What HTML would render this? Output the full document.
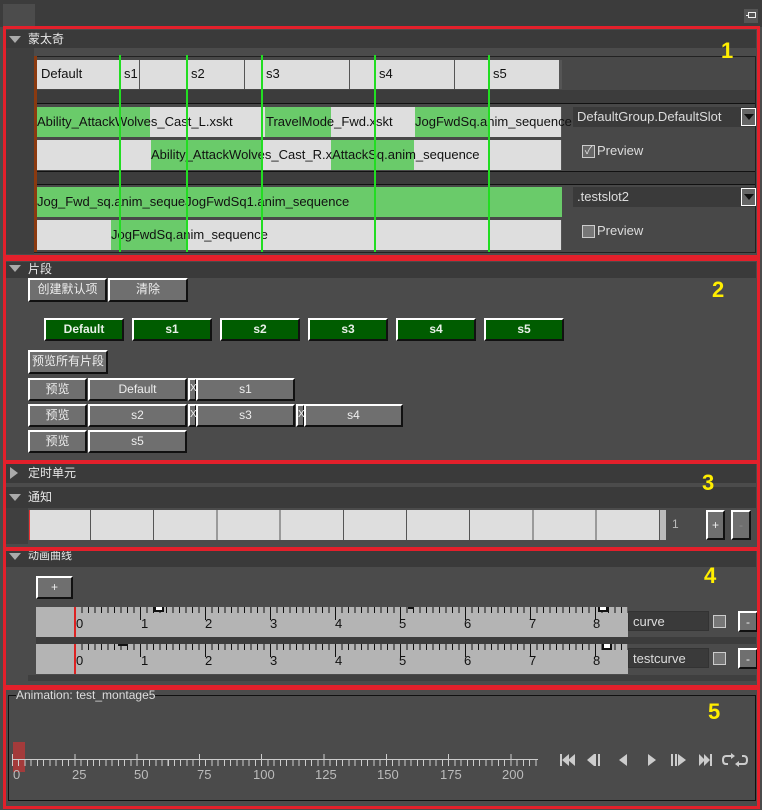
<!DOCTYPE html>
<html><head><meta charset="utf-8"><style>
*{margin:0;padding:0;box-sizing:border-box}
body{width:762px;height:810px;background:#4b4b4b;position:relative;overflow:hidden;font-family:"Liberation Sans","Noto Sans CJK SC",sans-serif;font-size:12px;color:#111}
.a{position:absolute}
.hdr{position:absolute;left:6px;right:6px;background:#3a3a3a;color:#e8e8e8;font-size:12px;padding-left:22px;line-height:18px}
.tri{position:absolute;left:3px;top:6px;width:0;height:0;border-left:6px solid transparent;border-right:6px solid transparent;border-top:7px solid #aaa}
.trir{position:absolute;left:4px;top:3px;width:0;height:0;border-top:6px solid transparent;border-bottom:6px solid transparent;border-left:8px solid #aaa}
.red{position:absolute;border:3px solid #e3202b}
.lt{position:absolute;background:#dedede;border-right:1px solid #555}
.gr{position:absolute;background:#6acb6a}
.tx{position:absolute;font-size:13px;color:#111;white-space:nowrap;line-height:30px}
.gl{position:absolute;width:2px;background:#22dd22;top:55px;height:197px}
.btn{position:absolute;background:#6f6f6f;color:#eee;text-align:center;font-size:12px;border-top:2px solid #fff;border-left:2px solid #fff;border-right:2px solid #111;border-bottom:2px solid #111;line-height:18px}
.gb{position:absolute;background:#005c00;color:#e8f0e8;text-align:center;font-size:12px;font-weight:bold;border-top:2px solid #fff;border-left:2px solid #fff;border-right:2px solid #111;border-bottom:2px solid #111;line-height:19px;width:80px;height:23px;top:318px}
.y{position:absolute;color:#ffee00;font-weight:bold;font-size:22px}
.dd{position:absolute;background:#3a3a3a;color:#ddd;font-size:13px;line-height:20px;padding-left:4px;height:20px}
.cb{position:absolute;width:13px;height:13px;background:#777;border:1px solid #ccc}
.lab{position:absolute;color:#ddd;font-size:13px}
.rt{position:absolute;height:6px;background:repeating-linear-gradient(90deg,#111 0 1px,transparent 1px 6.5px)}
.rT{position:absolute;height:13px;background:repeating-linear-gradient(90deg,#111 0 1px,transparent 1px 65px)}
.num{position:absolute;font-size:13px;color:#111}
</style></head><body>
<div class="a" style="left:0;top:0;width:762px;height:27px;background:#3c3c3c"></div>
<div class="a" style="left:3px;top:4px;width:32px;height:22px;background:#4c4c4c"></div>
<div class="a" style="left:744px;top:9px;width:14px;height:14px;background:#555"></div>
<div class="a" style="left:748px;top:12px;width:8px;height:6px;border:1px solid #eee"></div>
<div class="a" style="left:746px;top:15px;width:3px;height:1px;background:#eee"></div>

<div class="a" style="left:6px;top:48px;width:28px;height:206px;background:#3f3f3f"></div>
<div class="hdr" style="top:30px;height:18px"><div class="tri"></div>蒙太奇</div>
<div class="a" style="left:34px;top:56px;width:722px;height:197px;background:#484848;border:1px solid #222"></div>
<div class="a" style="left:34px;top:56px;width:3px;height:196px;background:#8a3a10"></div>
<div class="lt" style="left:37px;top:60px;width:103px;height:29px"></div>
<div class="lt" style="left:140px;top:60px;width:105px;height:29px"></div>
<div class="lt" style="left:245px;top:60px;width:105px;height:29px"></div>
<div class="lt" style="left:350px;top:60px;width:105px;height:29px"></div>
<div class="lt" style="left:455px;top:60px;width:107px;height:29px;border-right:3px solid #555"></div>
<div class="tx" style="left:41px;top:59px">Default</div>
<div class="tx" style="left:124px;top:59px">s1</div>
<div class="tx" style="left:191px;top:59px">s2</div>
<div class="tx" style="left:266px;top:59px">s3</div>
<div class="tx" style="left:379px;top:59px">s4</div>
<div class="tx" style="left:493px;top:59px">s5</div>
<div class="a" style="left:37px;top:90px;width:718px;height:14px;background:#3c3c3c;border-bottom:1px solid #111"></div>
<div class="a" style="left:37px;top:171px;width:718px;height:14px;background:#3c3c3c;border-bottom:1px solid #111;border-top:1px solid #111"></div>
<div class="lt" style="left:37px;top:107px;width:525px;height:30px"></div>
<div class="gr" style="left:37px;top:107px;width:113px;height:30px"></div>
<div class="gr" style="left:265px;top:107px;width:66px;height:30px"></div>
<div class="gr" style="left:415px;top:107px;width:75px;height:30px"></div>
<div class="tx" style="left:37px;top:107px">Ability_AttackWolves_Cast_L.xskt</div>
<div class="tx" style="left:266px;top:107px">TravelMode_Fwd.xskt</div>
<div class="tx" style="left:415px;top:107px">JogFwdSq.anim_sequence</div>
<div class="lt" style="left:37px;top:140px;width:525px;height:30px"></div>
<div class="gr" style="left:151px;top:140px;width:263px;height:30px"></div>
<div class="a" style="left:262px;top:140px;width:69px;height:30px;background:#dedede"></div>
<div class="tx" style="left:151px;top:140px">Ability_AttackWolves_Cast_R.xAttackSq.anim_sequence</div>
<div class="gr" style="left:37px;top:187px;width:525px;height:30px"></div>
<div class="tx" style="left:37px;top:187px">Jog_Fwd_sq.anim_sequeJogFwdSq1.anim_sequence</div>
<div class="lt" style="left:37px;top:220px;width:525px;height:30px"></div>
<div class="gr" style="left:111px;top:220px;width:76px;height:30px"></div>
<div class="tx" style="left:111px;top:220px">JogFwdSq.anim_sequence</div>
<div class="gl" style="left:119px"></div><div class="gl" style="left:186px"></div><div class="gl" style="left:261px"></div><div class="gl" style="left:374px"></div><div class="gl" style="left:488px"></div>
<div class="dd" style="left:573px;top:107px;width:182px">DefaultGroup.DefaultSlot</div>
<div class="a" style="left:741px;top:108px;width:15px;height:18px;background:#666;border:1px solid #fff"><div class="a" style="left:2px;top:5px;border-left:5px solid transparent;border-right:5px solid transparent;border-top:6px solid #111"></div></div>
<div class="cb" style="left:582px;top:145px;background:#666;color:#ddd;font-size:11px;line-height:11px;text-align:center">✓</div><div class="lab" style="left:597px;top:143px">Preview</div>
<div class="dd" style="left:573px;top:187px;width:182px">.testslot2</div>
<div class="a" style="left:741px;top:188px;width:15px;height:18px;background:#666;border:1px solid #fff"><div class="a" style="left:2px;top:5px;border-left:5px solid transparent;border-right:5px solid transparent;border-top:6px solid #111"></div></div>
<div class="cb" style="left:582px;top:225px"></div><div class="lab" style="left:597px;top:223px">Preview</div>
<div class="red" style="left:3px;top:26px;width:757px;height:232px"></div>
<div class="y" style="left:721px;top:38px">1</div>

<div class="hdr" style="top:262px;height:16px;line-height:14px"><div class="tri" style="top:3px"></div>片段</div>
<div class="btn" style="left:28px;top:278px;width:79px;height:24px">创建默认项</div>
<div class="btn" style="left:108px;top:278px;width:80px;height:24px">清除</div>
<div class="gb" style="left:44px">Default</div><div class="gb" style="left:132px">s1</div><div class="gb" style="left:220px">s2</div><div class="gb" style="left:308px">s3</div><div class="gb" style="left:396px">s4</div><div class="gb" style="left:484px">s5</div>
<div class="btn" style="left:28px;top:350px;width:80px;height:24px">预览所有片段</div>
<div class="btn" style="left:28px;top:378px;width:59px;height:23px">预览</div>
<div class="btn" style="left:88px;top:378px;width:99px;height:23px">Default</div>
<div class="btn" style="left:188px;top:378px;width:9px;height:23px;font-size:10px">X</div>
<div class="btn" style="left:196px;top:378px;width:99px;height:23px">s1</div>
<div class="btn" style="left:28px;top:404px;width:59px;height:23px">预览</div>
<div class="btn" style="left:88px;top:404px;width:99px;height:23px">s2</div>
<div class="btn" style="left:188px;top:404px;width:9px;height:23px;font-size:10px">X</div>
<div class="btn" style="left:196px;top:404px;width:99px;height:23px">s3</div>
<div class="btn" style="left:296px;top:404px;width:9px;height:23px;font-size:10px">X</div>
<div class="btn" style="left:304px;top:404px;width:99px;height:23px">s4</div>
<div class="btn" style="left:28px;top:430px;width:59px;height:23px">预览</div>
<div class="btn" style="left:88px;top:430px;width:99px;height:23px">s5</div>
<div class="red" style="left:3px;top:258px;width:757px;height:205px"></div>
<div class="y" style="left:712px;top:277px">2</div>

<div class="hdr" style="top:464px;height:19px"><div class="trir"></div>定时单元</div>
<div class="hdr" style="top:487px;height:21px;line-height:21px"><div class="tri" style="top:7px"></div>通知</div>
<div class="a" style="left:6px;top:508px;width:22px;height:36px;background:#3f3f3f"></div>
<div class="a" style="left:29px;top:510px;width:637px;height:30px;background:#dedede;background-image:repeating-linear-gradient(90deg,transparent 0 61px,#555 61px 62px,transparent 62px 63.2px)"></div>
<div class="a" style="left:29px;top:510px;width:1px;height:30px;background:#e33"></div>
<div class="a" style="left:660px;top:510px;width:6px;height:30px;background:#bbb"></div>
<div class="lab" style="left:672px;top:517px;color:#bbb;font-size:12px">1</div>
<div class="btn" style="left:706px;top:510px;width:19px;height:30px;line-height:26px">+</div>
<div class="btn" style="left:731px;top:510px;width:20px;height:30px;line-height:26px;color:#888">-</div>
<div class="red" style="left:3px;top:461px;width:757px;height:89px"></div>
<div class="y" style="left:702px;top:470px">3</div>

<div class="hdr" style="top:551px;height:16px;line-height:10px;font-size:11px"><div class="tri" style="top:2px"></div>动画曲线</div>
<div class="btn" style="left:36px;top:576px;width:37px;height:23px">+</div>
<div class="a" style="left:36px;top:607px;width:592px;height:30px;background:#b4b4b4"></div>
<div class="a" style="left:36px;top:644px;width:592px;height:30px;background:#b4b4b4"></div>
<div class="rt" style="left:75px;top:607px;width:553px"></div><div class="rT" style="left:75px;top:607px;width:553px"></div>
<div class="rt" style="left:75px;top:644px;width:553px"></div><div class="rT" style="left:75px;top:644px;width:553px"></div>
<div class="a" style="left:74px;top:607px;width:2px;height:30px;background:#d22"></div>
<div class="a" style="left:74px;top:644px;width:2px;height:30px;background:#d22"></div>
<div class="a" style="left:154px;top:607px;width:10px;height:5px;background:#111;border:2px solid #111;border-top:0;background:#fff"></div>
<div class="a" style="left:408px;top:607px;width:6px;height:2px;background:#111"></div>
<div class="a" style="left:408px;top:607px;width:6px;height:2px;background:#111"></div>
<div class="a" style="left:598px;top:607px;width:10px;height:5px;border:2px solid #111;border-top:0;background:#fff"></div>
<div class="a" style="left:118px;top:644px;width:10px;height:2px;background:#111"></div>
<div class="a" style="left:602px;top:644px;width:10px;height:6px;border:2px solid #111;border-top:0;background:#fff"></div>
<div class="num" style="left:76px;top:616px">0</div><div class="num" style="left:141px;top:616px">1</div><div class="num" style="left:205px;top:616px">2</div><div class="num" style="left:270px;top:616px">3</div><div class="num" style="left:335px;top:616px">4</div><div class="num" style="left:399px;top:616px">5</div><div class="num" style="left:464px;top:616px">6</div><div class="num" style="left:529px;top:616px">7</div><div class="num" style="left:593px;top:616px">8</div>
<div class="num" style="left:76px;top:653px">0</div><div class="num" style="left:141px;top:653px">1</div><div class="num" style="left:205px;top:653px">2</div><div class="num" style="left:270px;top:653px">3</div><div class="num" style="left:335px;top:653px">4</div><div class="num" style="left:399px;top:653px">5</div><div class="num" style="left:464px;top:653px">6</div><div class="num" style="left:529px;top:653px">7</div><div class="num" style="left:593px;top:653px">8</div>
<div class="a" style="left:36px;top:637px;width:720px;height:7px;background:#3c3c3c"></div>
<div class="a" style="left:28px;top:675px;width:728px;height:6px;background:#3f3f3f"></div>
<div class="dd" style="left:628px;top:611px;width:81px;border:1px solid #333;color:#ddd">curve</div>
<div class="dd" style="left:628px;top:648px;width:81px;border:1px solid #333;color:#ddd">testcurve</div>
<div class="cb" style="left:713px;top:615px"></div><div class="cb" style="left:713px;top:652px"></div>
<div class="btn" style="left:738px;top:611px;width:20px;height:21px">-</div>
<div class="btn" style="left:738px;top:648px;width:20px;height:21px">-</div>
<div class="red" style="left:3px;top:548px;width:757px;height:140px"></div>
<div class="y" style="left:704px;top:563px">4</div>

<div class="a" style="left:8px;top:695px;width:748px;height:106px;border:1px solid #111"></div>
<div class="lab" style="left:16px;top:688px;background:#4b4b4b;color:#ddd;font-size:12px">Animation: test_montage5</div>
<div class="a" style="left:13px;top:742px;width:12px;height:30px;background:#b33838;opacity:.85"></div>
<div class="a" style="left:12px;top:759px;width:526px;height:7px;background:repeating-linear-gradient(90deg,#ccc 0 1px,transparent 1px 6.23px)"></div>
<div class="a" style="left:12px;top:754px;width:526px;height:12px;background:repeating-linear-gradient(90deg,#ccc 0 1px,transparent 1px 62.3px)"></div>
<div class="a" style="left:12px;top:759px;width:526px;height:1px;background:#ccc"></div>
<div class="a" style="left:13px;top:767px;width:530px;height:16px;font-size:13px;color:#bbb">
<span class="a" style="left:0">0</span><span class="a" style="left:59px">25</span><span class="a" style="left:121px">50</span><span class="a" style="left:184px">75</span><span class="a" style="left:240px">100</span><span class="a" style="left:302px">125</span><span class="a" style="left:364px">150</span><span class="a" style="left:427px">175</span><span class="a" style="left:489px">200</span></div>
<svg class="a" style="left:558px;top:751px" width="192" height="18" fill="#ccc">
<rect x="2" y="3" width="2" height="12"/><path d="M4 9 L11 3 V15Z M10 9 L17 3 V15Z"/>
<path d="M29 9 L36 3 V15Z"/><rect x="36" y="3" width="2" height="12"/><rect x="40" y="3" width="2" height="12"/>
<path d="M61 9 L69 3 V15Z"/>
<path d="M90 3 L98 9 L90 15Z"/>
<rect x="113" y="3" width="2" height="12"/><rect x="117" y="3" width="2" height="12"/><path d="M120 3 L128 9 L120 15Z"/>
<path d="M141 3 L147 9 L141 15Z M146 3 L152 9 L146 15Z"/><rect x="152" y="3" width="2" height="12"/>
<path d="M173 5 H168 Q165 5 165 9 Q165 13 168 13 H170 M181 13 H186 Q189 13 189 9 Q189 5 186 5 H184" fill="none" stroke="#ccc" stroke-width="2"/>
<path d="M173 2 L177 5 L173 8Z M181 10 L177 13 L181 16Z"/>
</svg>
<div class="red" style="left:3px;top:687px;width:757px;height:122px"></div>
<div class="y" style="left:708px;top:699px">5</div>
</body></html>
